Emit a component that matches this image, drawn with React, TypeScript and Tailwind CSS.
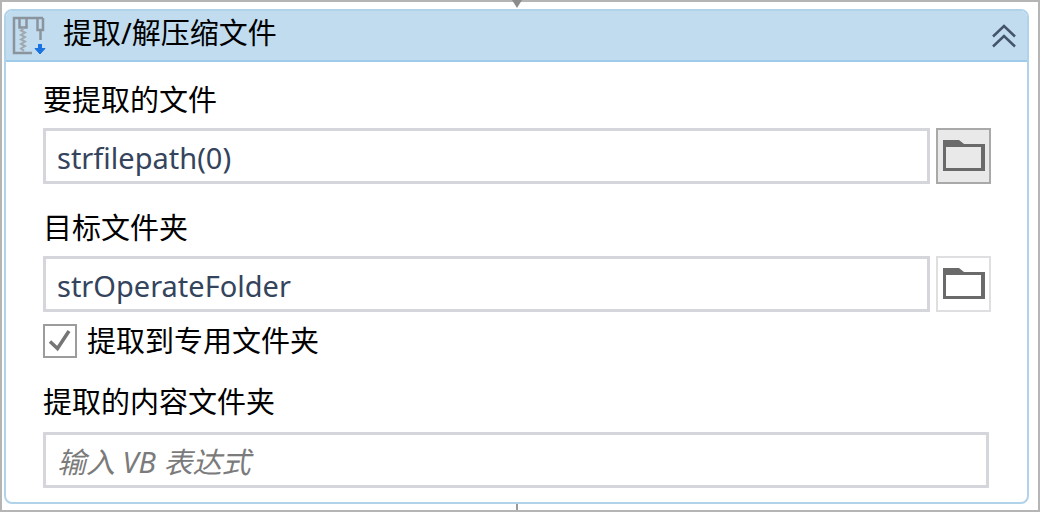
import { useState } from "react";

interface FieldProps {
  id: string;
  label: string;
  value: string;
  active?: boolean;
  onChange: (value: string) => void;
}

const inputStyle =
  "h-14 w-full min-w-0 flex-1 border-3 border-[#d5d6dc] bg-white px-[11px] pt-0.5 text-[29px] text-[#34445c] outline-none placeholder:text-[#7b7b7b] placeholder:italic placeholder:opacity-100";

function ZipIcon() {
  return (
    <svg viewBox="0 0 34 40" className="h-10 w-[34px] shrink-0" fill="none">
      <path d="M20 37H2V2H31" stroke="#8b949c" strokeWidth="2.5" />
      <path d="M25.5 2V14H31V2M28.5 14V24" stroke="#8b949c" strokeWidth="2.5" />
      <path d="M7.5 2V11.5H14.5V2" stroke="#8b949c" strokeWidth="2.5" />
      <path
        d="M12 12L9 14.5L13 16.5L9 19L13 21L9 23.5L13 25.5L9 28L13 30L9 32.5L12 35"
        stroke="#a0a9b0"
        strokeWidth="2"
      />
      <path d="M28 28V34" stroke="#1a73e0" strokeWidth="4" />
      <path d="M23 32.5H33L28 38Z" fill="#1a73e0" stroke="#1a73e0" strokeLinejoin="round" />
    </svg>
  );
}

function FolderIcon() {
  return (
    <svg viewBox="0 0 42 34" className="h-[34px] w-[42px]">
      <path d="M0 1H16L21 5H42V32H0ZM3 8V29H38V8Z" fill="#6a6a6a" fillRule="evenodd" />
    </svg>
  );
}

function FileField({ id, label, value, active, onChange }: FieldProps) {
  return (
    <div className="flex flex-col gap-3">
      <label htmlFor={id} className="text-[29px] leading-8">
        {label}
      </label>
      <div className="flex gap-1.5">
        <input
          id={id}
          type="text"
          value={value}
          onChange={(e) => onChange(e.target.value)}
          className={inputStyle}
        />
        <button
          type="button"
          aria-label="浏览"
          className={
            active
              ? "flex h-14 w-[55px] items-center justify-center border-2 border-[#a9a9a9] bg-[#e9e9e9]"
              : "flex h-14 w-[55px] items-center justify-center border-2 border-[#dfdfe2] bg-white"
          }
        >
          <FolderIcon />
        </button>
      </div>
    </div>
  );
}

export default function App() {
  const [file, setFile] = useState("strfilepath(0)");
  const [folder, setFolder] = useState("strOperateFolder");
  const [dedicated, setDedicated] = useState(true);
  const [output, setOutput] = useState("");
  const [open, setOpen] = useState(true);

  return (
    <div className="relative min-h-screen border-2 border-[#b5b5b5] bg-white pt-[7px] pr-[9px] pb-1.5 pl-0.5 font-['Noto_Sans','Noto_Sans_CJK_SC',sans-serif] text-black">
      {/* connectors to the previous and next activity */}
      <svg viewBox="0 0 10 8" className="absolute -top-0.5 left-[510px] h-2 w-2.5">
        <path d="M0 0H10L5 8Z" fill="#8c8c8c" />
      </svg>
      <div className="absolute bottom-0 left-[514px] h-1.5 w-0.5 bg-[#9a9a9a]" />

      <section className="overflow-hidden rounded-lg border-2 border-[#b1d3ea]">
        <header className="flex h-[51px] items-center border-b-2 border-[#9fcbea] bg-[#c1dcef] pr-2.5 pl-1.5">
          <ZipIcon />
          <h1 className="ml-[17px] flex-1 pb-1.5 text-[29px] leading-8">提取/解压缩文件</h1>
          <button type="button" aria-label="折叠" onClick={() => setOpen(!open)}>
            <svg viewBox="0 0 26 26" className="h-[26px] w-[26px]" fill="none">
              <path d="M2 13.5L13 3L24 13.5M2 23.5L13 13L24 23.5" stroke="#43546c" strokeWidth="2.5" />
            </svg>
          </button>
        </header>

        {open && (
          <div className="pt-[22px] pr-9 pb-3.5 pl-[37px]">
            <FileField id="file" label="要提取的文件" value={file} active onChange={setFile} />
            <div className="mt-7">
              <FileField id="folder" label="目标文件夹" value={folder} onChange={setFolder} />
            </div>

            <div className="mt-3 flex items-center gap-2.5">
              <span className="relative flex">
                <input
                  id="dedicated"
                  type="checkbox"
                  checked={dedicated}
                  onChange={(e) => setDedicated(e.target.checked)}
                  className="peer h-[34px] w-[34px] appearance-none border-2 border-[#9c9c9c] bg-white"
                />
                <svg
                  viewBox="0 0 34 34"
                  className="pointer-events-none absolute inset-0 hidden peer-checked:block"
                  fill="none"
                >
                  <path d="M7 17.5L14.5 24.5L26 7" stroke="#757575" strokeWidth="3.5" />
                </svg>
              </span>
              <label htmlFor="dedicated" className="text-[29px] leading-8">
                提取到专用文件夹
              </label>
            </div>

            <div className="mt-7 flex flex-col gap-3.5">
              <label htmlFor="output" className="text-[29px] leading-8">
                提取的内容文件夹
              </label>
              <div className="flex pr-0.5">
                <input
                  id="output"
                  type="text"
                  value={output}
                  placeholder="输入 VB 表达式"
                  onChange={(e) => setOutput(e.target.value)}
                  className={inputStyle}
                />
              </div>
            </div>
          </div>
        )}
      </section>
    </div>
  );
}
